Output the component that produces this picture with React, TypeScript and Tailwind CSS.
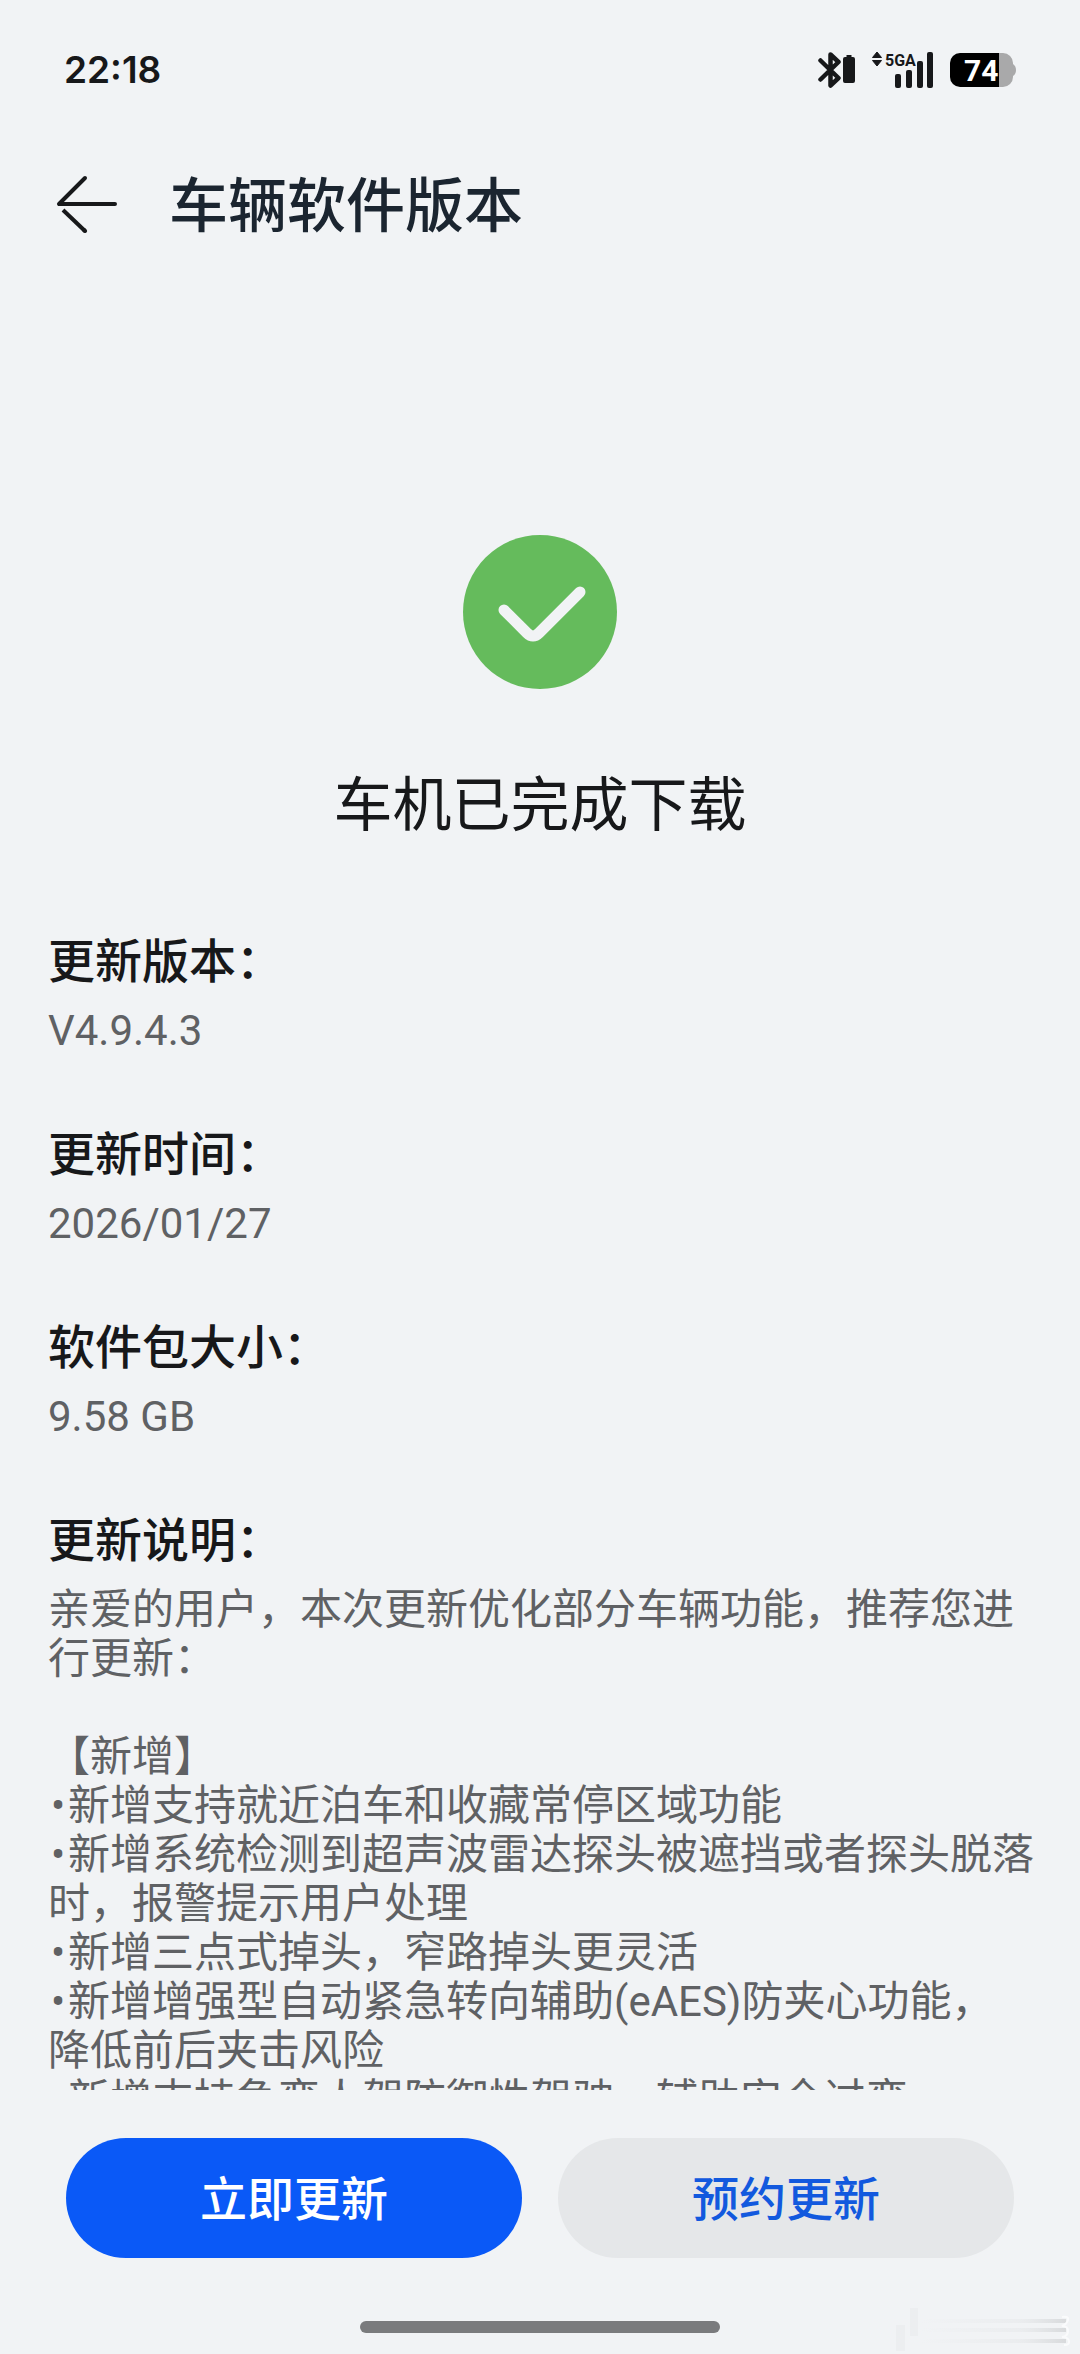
const infoItems = [
  { label: "更新版本：", value: "V4.9.4.3" },
  { label: "更新时间：", value: "2026/01/27" },
  { label: "软件包大小：", value: "9.58 GB" },
];

const newFeatures = [
  "新增支持就近泊车和收藏常停区域功能",
  "新增系统检测到超声波雷达探头被遮挡或者探头脱落时，报警提示用户处理",
  "新增三点式掉头，窄路掉头更灵活",
  "新增增强型自动紧急转向辅助(eAES)防夹心功能，降低前后夹击风险",
  "新增支持急弯人驾防御性驾驶，辅助安全过弯",
];

function BluetoothIcon() {
  return (
    <svg width="38" height="38" viewBox="0 0 38 38" fill="none" aria-hidden="true">
      <path
        d="M2.500 9.500L20.500 27L12.500 34.500V3.500L20.500 11L2.500 28.500"
        stroke="#17181a"
        strokeWidth="4.500"
        strokeLinecap="round"
        strokeLinejoin="round"
      />
      <path d="M28.500 4h5v2h1.500a2 2 0 0 1 2 2v22a2 2 0 0 1-2 2h-8a2 2 0 0 1-2-2V8a2 2 0 0 1 2-2h1.500z" fill="#17181a" />
    </svg>
  );
}

function SignalIcon() {
  return (
    <svg width="62" height="38" viewBox="0 0 62 38" fill="#17181a" aria-label="5GA">
      <path d="M5 1l4.500 5.500h-9zM5 15l4.500-5.500h-9z" stroke="#17181a" strokeLinejoin="round" />
      <text x="13" y="15" fontSize="16" fontWeight="700" fontFamily="Roboto, sans-serif">
        5GA
      </text>
      <rect x="23" y="23" width="6" height="14" rx="2" />
      <rect x="34" y="19" width="6" height="18" rx="2" />
      <rect x="45" y="10" width="6" height="27" rx="2" />
      <rect x="55" y="1" width="6" height="36" rx="2" />
    </svg>
  );
}

function BatteryIcon() {
  return (
    <svg width="66" height="34" viewBox="0 0 66 34" aria-label="74%">
      <path d="M49 0h4a10 10 0 0 1 10 10v1q3 2 3 6t-3 6v1a10 10 0 0 1-10 10h-4z" fill="#a9a9aa" />
      <path d="M49 0H10A10 10 0 0 0 0 10v14a10 10 0 0 0 10 10h39z" fill="#000" />
      <text x="14" y="28" fontSize="30" fontWeight="700" fill="#fff" fontFamily="Roboto, sans-serif">
        74
      </text>
    </svg>
  );
}

function StatusBar() {
  return (
    <div className="flex h-[140px] shrink-0 items-center justify-between px-16">
      <span className="font-[Inter] text-[37px] font-semibold text-[#17181a]">22:18</span>
      <div className="flex items-center gap-4">
        <BluetoothIcon />
        <SignalIcon />
        <BatteryIcon />
      </div>
    </div>
  );
}

function Header() {
  return (
    <header className="flex h-32 shrink-0 items-center gap-[51px] px-14">
      <button type="button" aria-label="返回">
        <svg width="62" height="58" viewBox="0 0 62 58" fill="none" stroke="#17181a" strokeWidth="4" strokeLinecap="round">
          <path d="M29 3L3 29H59" strokeLinejoin="round" />
          <path d="M7 35L29 56" strokeLinecap="butt" />
          <path d="M28 55L29 56" />
        </svg>
      </button>
      <h1 className="pt-1.5 text-[59px] font-medium text-[#1b2530]">车辆软件版本</h1>
    </header>
  );
}

// Faint streaks in the bottom right corner
function CornerMark() {
  return (
    <svg className="absolute right-0 bottom-0" width="190" height="54" viewBox="0 0 190 54" aria-hidden="true">
      <defs>
        <linearGradient id="streak" x1="0" x2="1">
          <stop offset="0" stopColor="#e8eaec" stopOpacity="0" />
          <stop offset="0.7" stopColor="#e6e8ea" stopOpacity="0.6" />
          <stop offset="1" stopColor="#d8dadc" />
        </linearGradient>
      </defs>
      <rect x="6" y="25" width="9" height="26" fill="#eceef0" />
      <rect x="20" y="8" width="8" height="28" fill="#eceef0" />
      <rect x="30" y="19" width="146" height="4" fill="url(#streak)" />
      <rect x="30" y="28" width="146" height="4" fill="url(#streak)" />
      <rect x="30" y="39" width="146" height="4" fill="url(#streak)" />
      <path d="M172 17q7-1 6 3t-6 6q6 0 6 5t-6 6q6 0 7 4t-5 4" stroke="#fafbfc" strokeWidth="2" fill="none" />
    </svg>
  );
}

export default function App() {
  return (
    <div
      lang="zh-CN"
      className="relative flex h-screen flex-col bg-[#f1f3f5] font-[Roboto,'Noto_Sans_CJK_SC',sans-serif] text-[#17181a]"
    >
      <StatusBar />
      <Header />

      <main className="min-h-0 flex-1 overflow-y-auto [scrollbar-width:none]">
        <div className="flex flex-col items-center pt-[267px]">
          <svg width="154" height="154" viewBox="0 0 154 154" fill="none" aria-hidden="true">
            <circle cx="77" cy="77" r="77" fill="#65bb5c" />
            <path
              d="M41 75L64 98Q70 104 76 98L117 57"
              stroke="#f1f3f5"
              strokeWidth="11"
              strokeLinecap="round"
              strokeLinejoin="round"
            />
          </svg>
          <h2 className="mt-[73px] text-[59px] leading-[88px]">车机已完成下载</h2>
        </div>

        <div className="pt-20 pr-[45px] pl-12">
          <dl>
            {infoItems.map((item) => (
              <div key={item.label} className="mb-[68px]">
                <dt className="text-[47px] leading-[64px] font-medium">{item.label}</dt>
                <dd className="mt-3 text-[42px] leading-[49px] text-[#5f6164]">{item.value}</dd>
              </div>
            ))}
          </dl>

          <section>
            <h3 className="text-[47px] leading-[64px] font-medium">更新说明：</h3>
            <div className="mt-3 text-[42px] leading-[49px] text-[#5f6164]">
              <p>亲爱的用户，本次更新优化部分车辆功能，推荐您进行更新：</p>
              <p className="mt-[49px]">【新增】</p>
              <ul>
                {newFeatures.map((text) => (
                  <li key={text}>
                    <span className="inline-block w-5 text-center">•</span>
                    {text}
                  </li>
                ))}
              </ul>
            </div>
          </section>
        </div>
      </main>

      <footer className="shrink-0 pt-12 pb-[21px]">
        <div className="flex gap-9 px-[66px]">
          <button type="button" className="h-[120px] flex-1 rounded-full bg-[#0a59f7] pt-1 text-[47px] font-medium text-white">
            立即更新
          </button>
          <button type="button" className="h-[120px] flex-1 rounded-full bg-[#e5e7e9] pt-1 text-[47px] font-medium text-[#1259de]">
            预约更新
          </button>
        </div>
        <div className="mx-auto mt-[63px] h-3 w-1/3 rounded-full bg-[#7a7b7d]" />
      </footer>

      <CornerMark />
    </div>
  );
}
